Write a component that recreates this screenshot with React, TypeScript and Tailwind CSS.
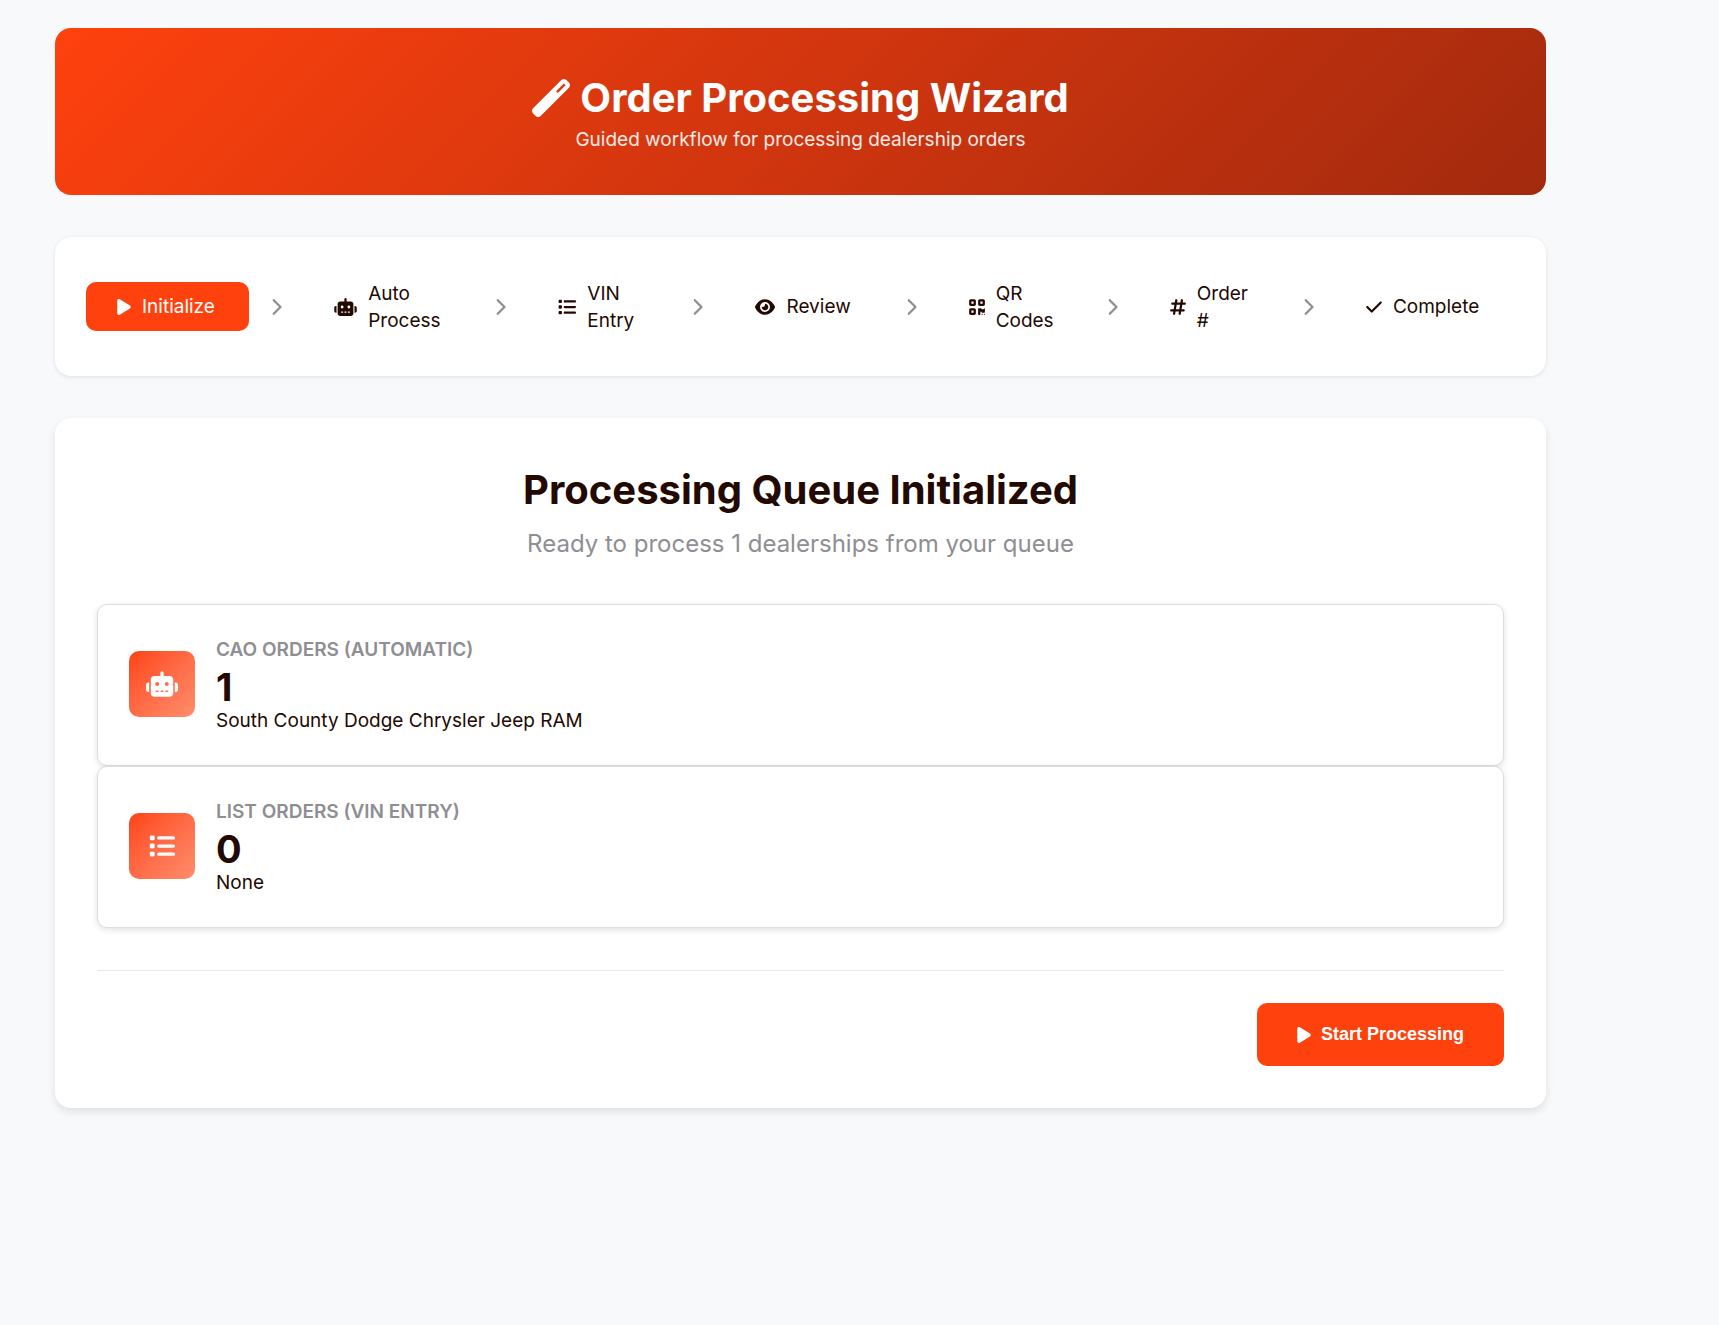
import { Fragment } from "react";
import {
  FaCheck,
  FaChevronRight,
  FaEye,
  FaHashtag,
  FaList,
  FaPlay,
  FaQrcode,
  FaRobot,
  FaWandMagic,
} from "react-icons/fa6";

const steps = [
  { label: "Initialize", Icon: FaPlay, icon: "w-3.5", basis: "basis-[163px]", active: true },
  { label: "Auto Process", Icon: FaRobot, icon: "w-[23px]", basis: "basis-[170px]" },
  { label: "VIN Entry", Icon: FaList, icon: "w-[18px]", basis: "basis-[143px]" },
  { label: "Review", Icon: FaEye, icon: "w-5", basis: "basis-[159px]" },
  { label: "QR Codes", Icon: FaQrcode, icon: "w-4", basis: "basis-[146px]" },
  { label: "Order #", Icon: FaHashtag, icon: "w-4", basis: "basis-[142px]" },
  { label: "Complete", Icon: FaCheck, icon: "w-4", basis: "basis-[180px]" },
];

const summaries = [
  {
    title: "CAO Orders (Automatic)",
    count: 1,
    detail: "South County Dodge Chrysler Jeep RAM",
    Icon: FaRobot,
    icon: "w-8",
  },
  { title: "List Orders (VIN Entry)", count: 0, detail: "None", Icon: FaList, icon: "w-[26px]" },
];

export default function App() {
  return (
    <div className="min-h-screen bg-[#f8f9fb] font-['Inter',sans-serif] text-[19px] leading-[27px] text-[#220901]">
      <div className="flex max-w-[1546px] flex-col gap-[42px] pt-7 pl-[55px]">
        <header className="rounded-2xl bg-linear-135 from-[#ff410d] to-[#a32a0e] p-[42px] text-center text-white">
          <h1 className="flex items-center justify-center gap-2.5 text-[40px] leading-[56px] font-bold">
            <FaWandMagic className="h-[38px] w-[38px]" />
            Order Processing Wizard
          </h1>
          <p className="text-white/90">Guided workflow for processing dealership orders</p>
        </header>

        <nav
          aria-label="Wizard steps"
          className="flex min-h-[139px] items-center justify-between rounded-2xl bg-white px-[31px] shadow-[0_1px_4px_rgba(0,0,0,0.1)]"
        >
          {steps.map(({ label, Icon, icon, basis, active }, i) => (
            <Fragment key={label}>
              {i > 0 && <FaChevronRight className="mx-[21px] h-[18px] w-3 shrink-0 text-[#8e8e93]" />}
              <div
                aria-current={active ? "step" : undefined}
                className={`flex items-center gap-[11px] rounded-[10px] py-[11px] pl-[31px] ${basis} ${
                  active ? "bg-[#ff410d] text-white" : ""
                } ${label.includes(" ") ? "pr-[31px]" : "pr-0"}`}
              >
                <Icon className={`h-[18px] shrink-0 ${icon}`} />
                <span>{label}</span>
              </div>
            </Fragment>
          ))}
        </nav>

        <main className="rounded-2xl bg-white p-[42px] shadow-[0_4px_8px_rgba(0,0,0,0.1)]">
          <div className="mb-11 text-center">
            <h2 className="text-[40px] leading-[60px] font-bold">Processing Queue Initialized</h2>
            <p className="mt-2 text-2xl leading-8 text-[#8e8e93]">
              Ready to process 1 dealerships from your queue
            </p>
          </div>

          {summaries.map(({ title, count, detail, Icon, icon }) => (
            <section
              key={title}
              className="flex items-center gap-[21px] rounded-[10px] border border-[#dedee0] bg-white px-[31px] pt-[30px] pb-8 shadow-[0_2px_6px_rgba(0,0,0,0.12)]"
            >
              <div className="flex size-[66px] items-center justify-center rounded-[10px] bg-linear-135 from-[#ff410d] to-[#ff8c6b] text-white">
                <Icon className={`h-[26px] ${icon}`} />
              </div>
              <div>
                <h3 className="leading-[30px] font-semibold text-[#8e8e93] uppercase">{title}</h3>
                <p className="text-[38px] leading-[44px] font-bold">{count}</p>
                <p className="leading-6">{detail}</p>
              </div>
            </section>
          ))}

          <div className="mt-[42px] flex justify-end border-t border-[#e5e5ea] pt-8">
            <button
              type="button"
              className="flex h-[63px] items-center gap-2.5 rounded-[10px] bg-[#ff410d] px-10 font-['Liberation_Sans',sans-serif] text-[18px] font-bold text-white"
            >
              <FaPlay className="h-[18px] w-3.5" />
              Start Processing
            </button>
          </div>
        </main>
      </div>
    </div>
  );
}
